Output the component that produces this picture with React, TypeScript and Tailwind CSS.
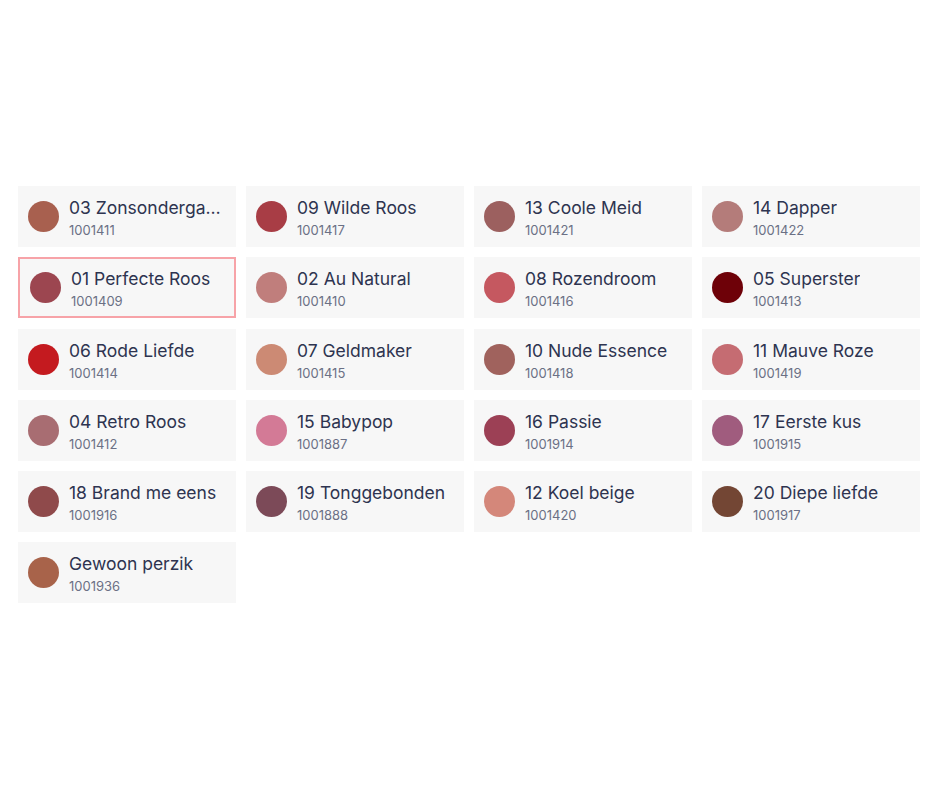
import React from "react";

interface Shade {
  name: string;
  code: string;
  color: string;
}

const shades: Shade[] = [
  { name: "03 Zonsondergang", code: "1001411", color: "#a8604f" },
  { name: "09 Wilde Roos", code: "1001417", color: "#a83d45" },
  { name: "13 Coole Meid", code: "1001421", color: "#9c605f" },
  { name: "14 Dapper", code: "1001422", color: "#b47c7a" },
  { name: "01 Perfecte Roos", code: "1001409", color: "#9c4650" },
  { name: "02 Au Natural", code: "1001410", color: "#c07e7c" },
  { name: "08 Rozendroom", code: "1001416", color: "#c55860" },
  { name: "05 Superster", code: "1001413", color: "#6e0108" },
  { name: "06 Rode Liefde", code: "1001414", color: "#c41a1f" },
  { name: "07 Geldmaker", code: "1001415", color: "#cc8a74" },
  { name: "10 Nude Essence", code: "1001418", color: "#a0625d" },
  { name: "11 Mauve Roze", code: "1001419", color: "#c56c72" },
  { name: "04 Retro Roos", code: "1001412", color: "#a86d72" },
  { name: "15 Babypop", code: "1001887", color: "#d37a96" },
  { name: "16 Passie", code: "1001914", color: "#9c4055" },
  { name: "17 Eerste kus", code: "1001915", color: "#a05c7e" },
  { name: "18 Brand me eens", code: "1001916", color: "#8f4a4b" },
  { name: "19 Tonggebonden", code: "1001888", color: "#7c4a58" },
  { name: "12 Koel beige", code: "1001420", color: "#d4877a" },
  { name: "20 Diepe liefde", code: "1001917", color: "#734634" },
  { name: "Gewoon perzik", code: "1001936", color: "#a8634a" },
];

function ShadeCard({
  shade,
  selected,
  onSelect,
}: {
  shade: Shade;
  selected: boolean;
  onSelect: () => void;
}) {
  return (
    <button
      type="button"
      onClick={onSelect}
      className={`flex h-[61px] min-w-0 items-center gap-[10px] bg-[#f7f7f7] pl-[10px] pr-[12px] text-left ${
        selected ? "border-2 border-[#f7a3a8]" : ""
      }`}
    >
      {/* swatch colour comes from data */}
      <span
        className="h-[31px] w-[31px] flex-shrink-0 rounded-full"
        style={{ backgroundColor: shade.color }}
      />
      <span className="flex min-w-0 flex-col pt-[3px]">
        <span className="truncate text-[17.5px] leading-[22px] text-[#2e3450]">
          {shade.name}
        </span>
        <span className="mt-[2px] text-[13px] leading-[18px] text-[#6b7085]">
          {shade.code}
        </span>
      </span>
    </button>
  );
}

export default function App() {
  const [selected, setSelected] = React.useState("1001409");

  return (
    <div
      className="min-h-[788px] w-full bg-white pt-[186px] pl-[18px] pr-[20px]"
      style={{ fontFamily: "Inter, 'Noto Sans', sans-serif" }}
    >
      <div className="grid grid-cols-4 gap-x-[10px] gap-y-[10.3px]">
        {shades.map((shade) => (
          <ShadeCard
            key={shade.code}
            shade={shade}
            selected={selected === shade.code}
            onSelect={() => setSelected(shade.code)}
          />
        ))}
      </div>
    </div>
  );
}
